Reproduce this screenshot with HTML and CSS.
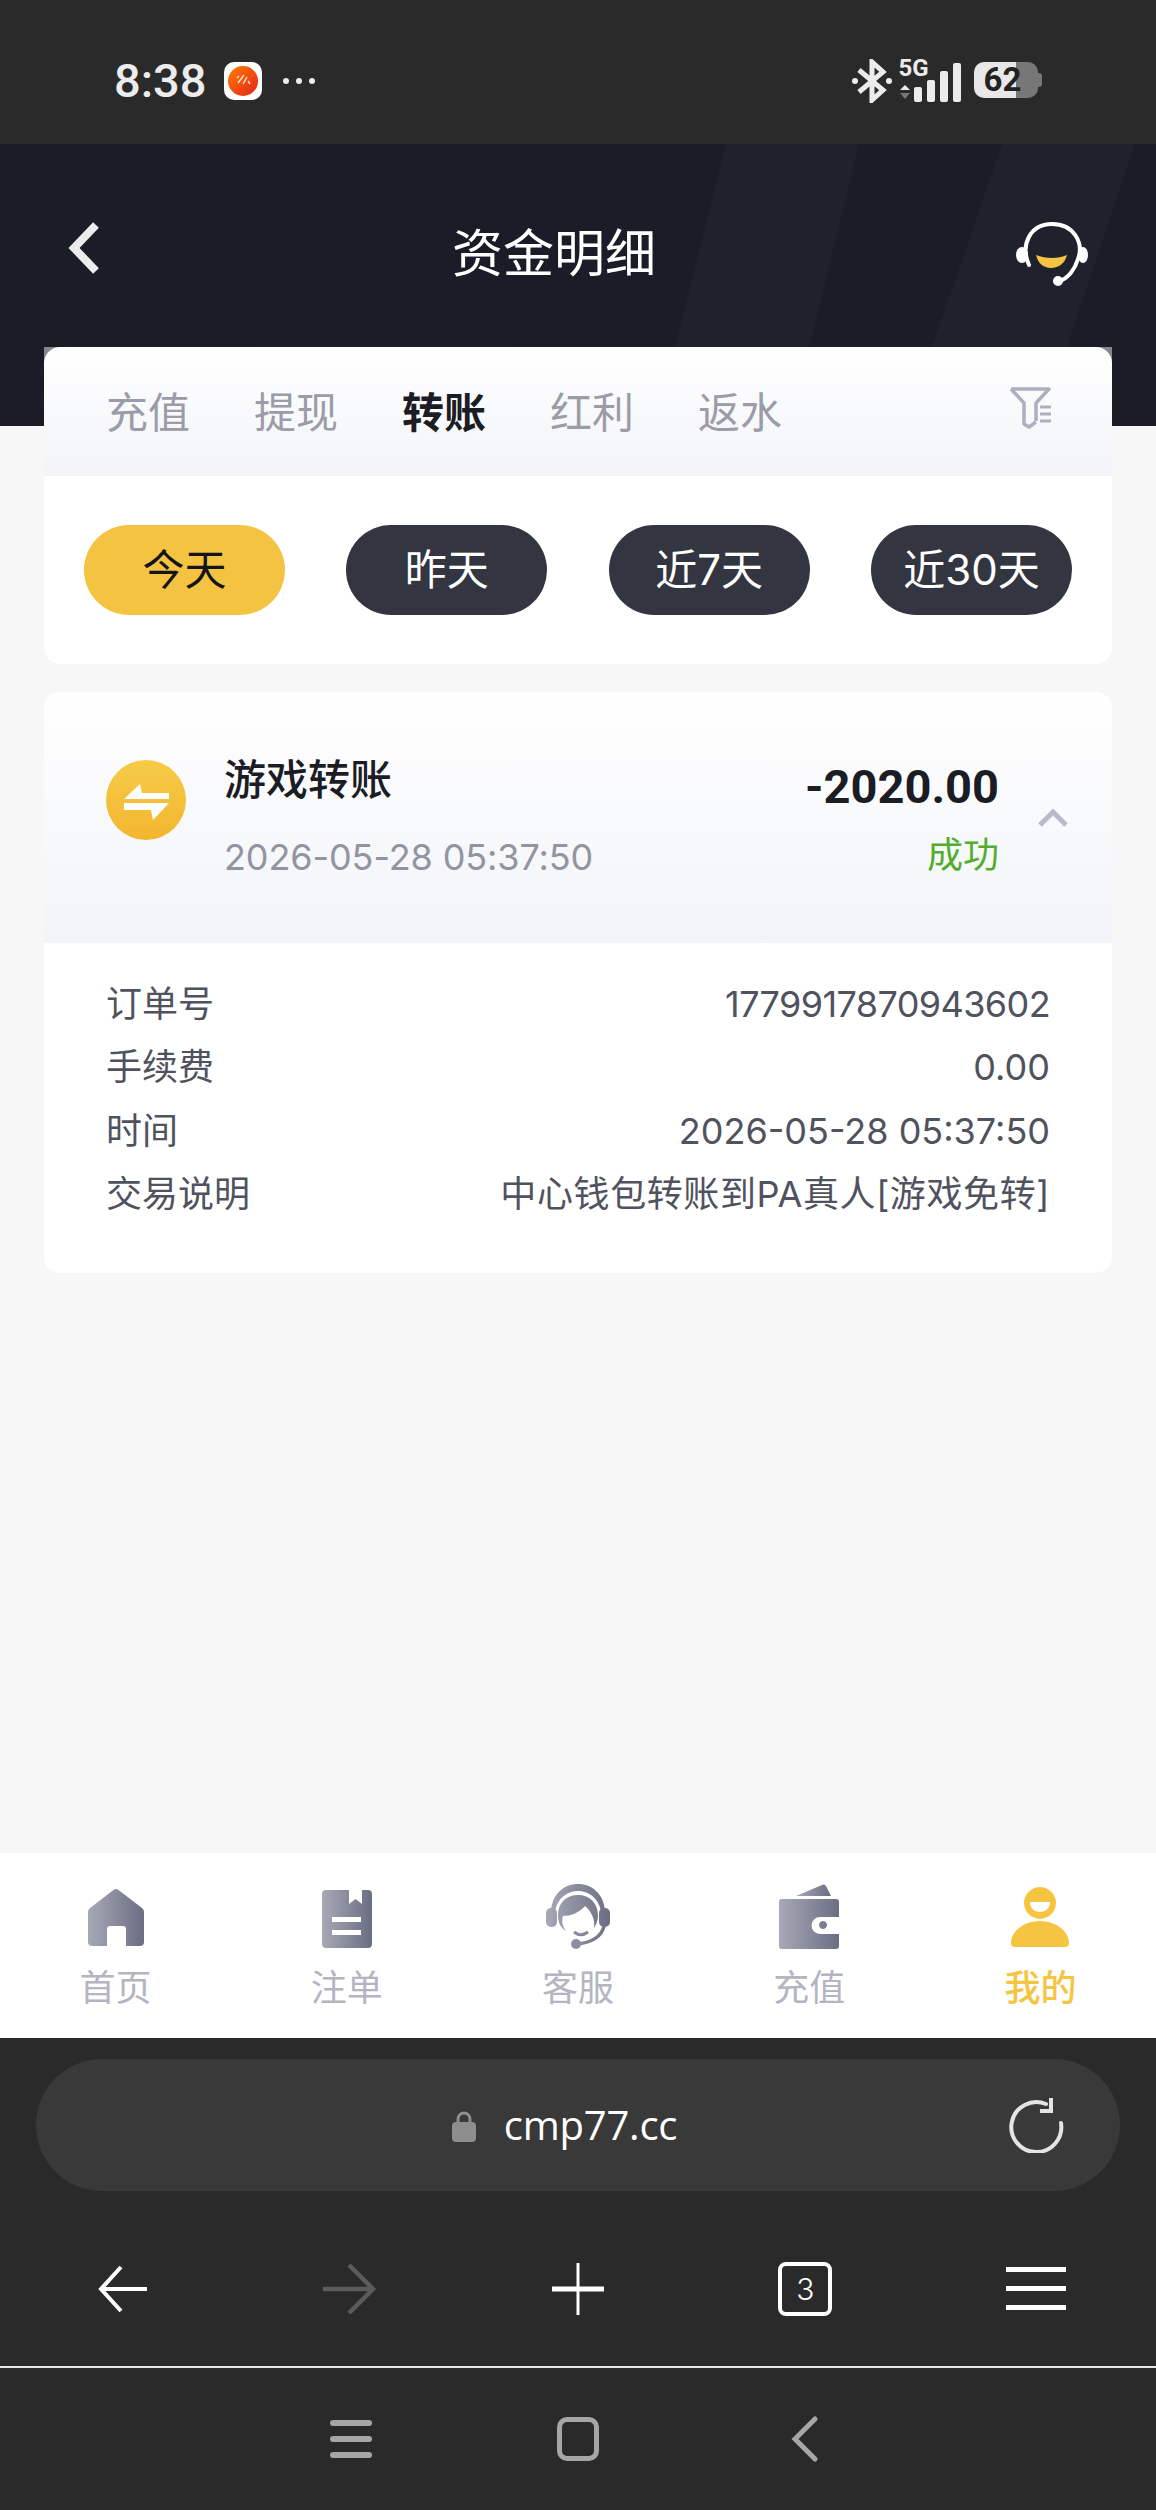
FILE: index.html
```html
<!DOCTYPE html>
<html lang="zh-CN">
<head>
    <meta charset="UTF-8">
    <meta name="viewport" content="width=device-width, initial-scale=1.0">
    <title>资金明细</title>
    <link rel="stylesheet" href="styles.css">
</head>
<body>
    <div class="status-bar">
        <span class="clock">8:38</span>
        <span class="app-badge">
            <svg viewBox="0 0 30 30" width="30" height="30">
                <defs>
                    <linearGradient id="appGrad" x1="0" y1="0" x2="1" y2="1">
                        <stop offset="0" stop-color="#ff7d00"/>
                        <stop offset="1" stop-color="#e2241c"/>
                    </linearGradient>
                </defs>
                <circle cx="15" cy="15" r="15" fill="url(#appGrad)"/>
                <path d="M9 12 L11 10 M10 17 L16 9 M15 18 L19 11 M20 15 L22 18" stroke="#ffe3c8" stroke-width="1.500" fill="none"/>
            </svg>
        </span>
        <span class="more-dots"><i></i><i></i><i></i></span>
        <svg class="bluetooth" viewBox="0 0 40 44" width="40" height="44">
            <path d="M7 11 L31 31 L20 41 V3 L31 13 L7 33" fill="none" stroke="#ececec" stroke-width="5"/>
            <circle cx="3" cy="22" r="3" fill="#ececec"/>
            <circle cx="37" cy="22" r="3" fill="#ececec"/>
        </svg>
        <div class="signal">
            <span class="net-type">5G</span>
            <svg viewBox="0 0 62 42" width="62" height="42">
                <path d="M6 22 L11 27 H1 Z" fill="#ececec"/>
                <path d="M1 30 H11 L6 36 Z" fill="#777"/>
                <rect x="15" y="24" width="8" height="15" rx="2" fill="#ececec"/>
                <rect x="28" y="17" width="8" height="22" rx="2" fill="#ececec"/>
                <rect x="41" y="8" width="8" height="31" rx="2" fill="#ececec"/>
                <rect x="54" y="0" width="8" height="39" rx="2" fill="#ececec"/>
            </svg>
        </div>
        <div class="battery"><span>62</span></div>
    </div>

    <header class="page-head">
        <svg class="stripes" viewBox="0 0 1156 282" width="1156" height="282">
            <polygon points="726,0 859,0 790,282 655,282" fill="#1f222c"/>
            <polygon points="1002,0 1135,0 1040,282 905,282" fill="#1f222c"/>
        </svg>
        <svg class="back" viewBox="0 0 32 52" width="32" height="52">
            <path d="M28 3 L6 26 L28 49" fill="none" stroke="#ececec" stroke-width="8"/>
        </svg>
        <h1>资金明细</h1>
        <svg class="service" viewBox="0 0 72 66" width="72" height="66">
            <path d="M13 44 C4 24 14 3 36 3 C58 3 68 22 62 38 C59 48 52 58 43 60" fill="none" stroke="#fff" stroke-width="4" stroke-linecap="round"/>
            <ellipse cx="6" cy="34" rx="6" ry="8" fill="#fff"/>
            <ellipse cx="67" cy="34" rx="5" ry="8" fill="#fff"/>
            <circle cx="42" cy="60" r="5" fill="#fff"/>
            <path d="M20 34 C30 38 42 38 51 34 C49 42 43 47 35 47 C27 47 22 42 20 34 Z" fill="#f5c242"/>
        </svg>
    </header>

    <main class="content">
        <section class="card filter-card">
            <div class="tabs">
                <span class="tab">充值</span>
                <span class="tab">提现</span>
                <span class="tab active">转账</span>
                <span class="tab">红利</span>
                <span class="tab">返水</span>
                <svg class="filter-icon" viewBox="0 0 44 42" width="44" height="42">
                    <path d="M3 2 H41 L28 16 V34 M3 2 L16 16 V37 L21 40 L28 35" fill="none" stroke="#adafbf" stroke-width="3.500" stroke-linejoin="round"/>
                    <path d="M32 20 H43 M32 27 H43 M32 34 H43" stroke="#adafbf" stroke-width="3"/>
                </svg>
            </div>
            <div class="pills">
                <span class="pill selected">今天</span>
                <span class="pill">昨天</span>
                <span class="pill">近7天</span>
                <span class="pill">近30天</span>
            </div>
        </section>

        <section class="card record-card">
            <div class="record-head">
                <svg class="swap-icon" viewBox="0 0 80 80" width="80" height="80">
                    <defs>
                        <linearGradient id="swapGrad" x1="0" y1="0" x2="0" y2="1">
                            <stop offset="0" stop-color="#f6cb47"/>
                            <stop offset="1" stop-color="#f3b630"/>
                        </linearGradient>
                    </defs>
                    <circle cx="40" cy="40" r="40" fill="url(#swapGrad)"/>
                    <path d="M18 39 L34 24 L36 33 H63 V39 Z M18 43 H63 L47 60 L45 50 H18 Z" fill="#fff"/>
                </svg>
                <div class="record-info">
                    <div class="record-title">游戏转账</div>
                    <div class="record-date">2026-05-28 05:37:50</div>
                </div>
                <div class="record-money">
                    <div class="amount">-2020.00</div>
                    <div class="state">成功</div>
                </div>
                <svg class="chevron" viewBox="0 0 32 20" width="32" height="20">
                    <path d="M3 17 L16 4 L29 17" fill="none" stroke="#b9bbcb" stroke-width="5"/>
                </svg>
            </div>
            <div class="record-detail">
                <div class="detail-row"><span class="detail-label">订单号</span><span class="order-no">1779917870943602</span></div>
                <div class="detail-row"><span class="detail-label">手续费</span><span>0.00</span></div>
                <div class="detail-row"><span class="detail-label">时间</span><span>2026-05-28 05:37:50</span></div>
                <div class="detail-row"><span class="detail-label">交易说明</span><span class="desc">中心钱包转账到PA真人[游戏免转]</span></div>
            </div>
        </section>
    </main>

    <nav class="tabbar">
        <a class="nav-item">
            <svg viewBox="0 0 56 66" width="56" height="66">
                <defs>
                    <linearGradient id="navGrad" x1="0" y1="0" x2="1" y2="0">
                        <stop offset="0" stop-color="#a7a9b6"/>
                        <stop offset="1" stop-color="#6b6e83"/>
                    </linearGradient>
                    <linearGradient id="headGrad" gradientUnits="userSpaceOnUse" x1="0" y1="0" x2="64" y2="0">
                        <stop offset="0" stop-color="#a7a9b6"/>
                        <stop offset="1" stop-color="#6b6e83"/>
                    </linearGradient>
                </defs>
                <path d="M25.500 6 a4 4 0 0 1 5 0 L54 24 a5 5 0 0 1 2 4 V58 a4 4 0 0 1 -4 4 H38 V45 a3 3 0 0 0 -3 -3 H22 a3 3 0 0 0 -3 3 V62 H4 a4 4 0 0 1 -4 -4 V28 a5 5 0 0 1 2 -4 Z" fill="url(#navGrad)"/>
            </svg>
            <span>首页</span>
        </a>
        <a class="nav-item">
            <svg viewBox="0 0 50 66" width="50" height="66">
                <path fill-rule="evenodd" d="M4 6 H27 V20 L33.500 15 L40 20 V6 H46 a4 4 0 0 1 4 4 V60 a4 4 0 0 1 -4 4 H4 a4 4 0 0 1 -4 -4 V10 a4 4 0 0 1 4 -4 Z M10 33 V38 H39 V33 Z M10 46 V51 H39 V46 Z" fill="url(#navGrad)"/>
            </svg>
            <span>注单</span>
        </a>
        <a class="nav-item">
            <svg viewBox="0 0 64 66" width="64" height="66">
                <path d="M5 27 C6 10 18 0 32 0 C46 0 58 10 59 27 L55 27 C52 13 42 7 32 7 C22 7 12 13 9 27 Z" fill="url(#headGrad)"/>
                <path d="M32 11 C44 11 52 19 52 32 C52 37 50 41 48 44 C49 36 46 28 39 22 C33 29 24 32 17 32 C15 38 17 43 20 47 C14 43 12 38 12 31 C12 19 20 11 32 11 Z" fill="url(#headGrad)"/>
                <rect x="0" y="24" width="11" height="19" rx="5" fill="url(#headGrad)"/>
                <rect x="53" y="24" width="11" height="19" rx="5" fill="url(#headGrad)"/>
                <path d="M28 48 C33 52 38 51 42 48" fill="none" stroke="url(#headGrad)" stroke-width="3"/>
                <path d="M58 42 C56 52 46 59 30 60" fill="none" stroke="url(#headGrad)" stroke-width="3.500"/>
                <circle cx="30" cy="60" r="5" fill="url(#headGrad)"/>
            </svg>
            <span>客服</span>
        </a>
        <a class="nav-item">
            <svg viewBox="0 0 60 66" width="60" height="66">
                <path d="M17 12 L43 1 a3 3 0 0 1 4 1 L52 12 Z" fill="url(#navGrad)"/>
                <path d="M3 15 H57 a3 3 0 0 1 3 3 V33 H41 a8 8 0 0 0 0 17 H60 V62 a3 3 0 0 1 -3 3 H3 a3 3 0 0 1 -3 -3 V18 a3 3 0 0 1 3 -3 Z M44 37 a4 4 0 1 0 0.010 0 Z" fill-rule="evenodd" fill="url(#navGrad)"/>
            </svg>
            <span>充值</span>
        </a>
        <a class="nav-item active">
            <svg viewBox="0 0 58 66" width="58" height="66">
                <path fill-rule="evenodd" d="M29 3 a16 16 0 1 0 0.010 0 Z M19 18 H39 C39 24 35 28 29 28 C23 28 19 24 19 18 Z" fill="#f5c542"/>
                <path d="M29 37 C46 37 58 48 58 59 a4 4 0 0 1 -4 4 H4 a4 4 0 0 1 -4 -4 C0 48 12 37 29 37 Z" fill="#f5c542"/>
            </svg>
            <span>我的</span>
        </a>
    </nav>

    <div class="browser-bar">
        <div class="url-box">
            <svg class="lock" viewBox="0 0 26 32" width="26" height="32">
                <path d="M7 14 V9 a6 6 0 0 1 12 0 V14" fill="none" stroke="#8e8e8e" stroke-width="3"/>
                <rect x="1" y="12" width="24" height="20" rx="4" fill="#8e8e8e"/>
            </svg>
            <span class="url-text">cmp77.cc</span>
            <svg class="reload" viewBox="0 0 56 56" width="56" height="56">
                <path d="M38 7 A25 25 0 1 0 53 26" fill="none" stroke="#e4e4e4" stroke-width="4" stroke-linecap="round"/>
                <path d="M43 1 V14 H32" fill="none" stroke="#e4e4e4" stroke-width="4"/>
            </svg>
        </div>
        <div class="browser-tools">
            <svg viewBox="0 0 50 50" width="50" height="50">
                <path d="M24 3 L4 25 L24 47 M4 25 H50" fill="none" stroke="#fff" stroke-width="4"/>
            </svg>
            <svg viewBox="0 0 56 50" width="56" height="50">
                <path d="M28 1 L52 25 L28 49 M2 25 H52" fill="none" stroke="#5b5b5b" stroke-width="4.500"/>
            </svg>
            <svg viewBox="0 0 54 54" width="54" height="54">
                <path d="M27 1 V53" stroke="#fff" stroke-width="3"/>
                <path d="M1 27 H53" stroke="#fff" stroke-width="5"/>
            </svg>
            <span class="tab-count">3</span>
            <span class="hamburger"><i></i><i></i><i></i></span>
        </div>
        <div class="system-nav">
            <span class="sys-menu"><i></i><i></i><i></i></span>
            <span class="sys-home"></span>
            <svg viewBox="0 0 30 46" width="30" height="46">
                <path d="M26 3 L6 23 L26 43" fill="none" stroke="#a6a6a6" stroke-width="5" stroke-linecap="round"/>
            </svg>
        </div>
    </div>
</body>
</html>
```

FILE: styles.css
```css
* {
    box-sizing: border-box;
}
html, body {
    margin: 0;
    padding: 0;
}
body {
    width: 1156px;
    height: 2510px;
    display: flex;
    flex-direction: column;
    overflow: hidden;
    background-color: #f7f7f7;
    font-family: Inter, "Noto Sans CJK SC", sans-serif;
}

/* phone status bar */
.status-bar {
    height: 144px;
    flex-shrink: 0;
    display: flex;
    align-items: center;
    padding: 18px 0 0 114px;
    background-color: #2a2a2a;
    color: #ececec;
}
.clock {
    font-family: Roboto, sans-serif;
    font-size: 47px;
    font-weight: 500;
    line-height: 44px;
}
.app-badge {
    width: 38px;
    height: 38px;
    margin-left: 17px;
    border-radius: 10px;
    background-color: #fff;
    display: flex;
    align-items: center;
    justify-content: center;
}
.more-dots {
    display: flex;
    gap: 7px;
    margin-left: 21px;
}
.more-dots i {
    width: 6px;
    height: 6px;
    border-radius: 50%;
    background-color: #ececec;
}
.bluetooth {
    margin-left: 537px;
}
.signal {
    position: relative;
    width: 62px;
    height: 42px;
    margin-left: 7px;
    margin-top: 6px;
}
.net-type {
    position: absolute;
    left: 0;
    top: -7px;
    font-family: Roboto, sans-serif;
    font-size: 24px;
    font-weight: 700;
    line-height: 24px;
}
.signal svg {
    display: block;
}
.battery {
    position: relative;
    width: 64px;
    height: 36px;
    margin-left: 13px;
    margin-top: -2px;
    padding-right: 6px;
    border-radius: 10px;
    background: linear-gradient(90deg, #e8e8e8 0 42px, #777 42px);
    color: #222;
    font-family: Roboto, sans-serif;
    font-size: 33px;
    font-weight: 700;
    line-height: 36px;
    text-align: center;
}
.battery::after {
    content: "";
    position: absolute;
    right: -4px;
    top: 11px;
    width: 4px;
    height: 14px;
    border-radius: 0 3px 3px 0;
    background-color: #777;
}

/* dark title bar */
.page-head {
    position: relative;
    height: 282px;
    flex-shrink: 0;
    display: flex;
    align-items: flex-start;
    justify-content: space-between;
    padding: 78px 68px 0 68px;
    background-color: #1a1d27;
}
.stripes {
    position: absolute;
    left: 0;
    top: 0;
}
.back, .service {
    position: relative;
}
.service {
    margin-top: -1px;
}
.page-head h1 {
    position: relative;
    margin: 2px 8px 0 0;
    color: #fff;
    font-size: 51px;
    font-weight: 400;
    line-height: 60px;
}

.content {
    flex: 1;
    padding: 0 44px;
    margin-top: -79px;
    position: relative;
}
.card {
    background-color: #fff;
    border-radius: 16px;
    overflow: hidden;
}

/* filter card */
.filter-card {
    height: 317px;
    border-radius: 0 0 16px 16px;
    background: linear-gradient(#85878f 0 20px, #fff 20px);
}
.tabs {
    height: 129px;
    display: flex;
    align-items: center;
    gap: 64px;
    padding: 2px 60px 0 62px;
    border-radius: 16px 16px 0 0;
    background: linear-gradient(#fff, #f2f4f8);
}
.tab {
    color: #9b9ca7;
    font-size: 42px;
    line-height: 50px;
}
.tab.active {
    color: #1b1c24;
    font-weight: 700;
}
.filter-icon {
    margin-left: auto;
    margin-top: -10px;
}
.pills {
    display: flex;
    justify-content: space-between;
    padding: 49px 40px 0;
}
.pill {
    width: 201px;
    height: 90px;
    border-radius: 45px;
    background-color: #333540;
    color: #fff;
    font-size: 42px;
    line-height: 90px;
    text-align: center;
}
.pill.selected {
    background-color: #f5c342;
    color: #14151a;
}

/* transaction record */
.record-card {
    height: 581px;
    margin-top: 28px;
}
.record-head {
    height: 251px;
    display: flex;
    align-items: flex-start;
    padding: 66px 43px 0 62px;
    background: linear-gradient(#fff, #f2f4f8);
}
.swap-icon {
    flex-shrink: 0;
    margin-top: 2px;
}
.record-info {
    margin-left: 38px;
    flex: 1;
}
.record-title {
    color: #1b1c24;
    font-size: 42px;
    font-weight: 500;
    line-height: 44px;
}
.record-date {
    margin-top: 33px;
    color: #9394a1;
    font-size: 36px;
    letter-spacing: -0.1px;
    line-height: 44px;
}
.record-money {
    margin-top: 4px;
    text-align: right;
}
.amount {
    color: #1b1c24;
    font-family: Roboto, sans-serif;
    font-size: 47px;
    font-weight: 700;
    line-height: 50px;
}
.state {
    margin-top: 21px;
    color: #52ad2e;
    font-size: 36px;
    line-height: 44px;
}
.chevron {
    margin-left: 38px;
    margin-top: 50px;
}
.record-detail {
    padding: 30px 62px 0 62px;
    color: #50525e;
    font-size: 36px;
}
.detail-row {
    display: flex;
    justify-content: space-between;
    height: 63.3px;
    line-height: 63.3px;
}
.order-no {
    letter-spacing: -0.6px;
}
.desc {
    letter-spacing: 0.6px;
}

/* app tab bar */
.tabbar {
    height: 185px;
    flex-shrink: 0;
    display: grid;
    grid-template-columns: repeat(5, 1fr);
    background-color: #fff;
}
.nav-item {
    display: flex;
    flex-direction: column;
    align-items: center;
    padding-top: 28px;
    color: #b4b5c0;
    font-size: 36px;
    line-height: 44px;
}
.nav-item svg {
    display: block;
    height: 72px;
}
.nav-item span {
    margin-top: 13px;
}
.nav-item.active {
    color: #f5c542;
    font-weight: 500;
}

/* browser chrome */
.browser-bar {
    height: 472px;
    flex-shrink: 0;
    background-color: #2a2a2a;
    padding-top: 21px;
}
.url-box {
    position: relative;
    height: 132px;
    margin: 0 36px;
    border-radius: 66px;
    background-color: #393939;
    display: flex;
    align-items: center;
    justify-content: center;
    gap: 27px;
    padding-right: 28px;
}
.url-text {
    color: #fff;
    font-family: "Open Sans", sans-serif;
    font-size: 40px;
    letter-spacing: -0.2px;
    line-height: 50px;
}
.lock {
    margin-top: 2px;
}
.reload {
    position: absolute;
    right: 56px;
    top: 38px;
}
.browser-tools {
    height: 177px;
    border-bottom: 2px solid #e8e8e8;
    padding: 20px 90px 0 97px;
    display: flex;
    align-items: center;
    justify-content: space-between;
}
.tab-count {
    width: 54px;
    height: 54px;
    border: 4px solid #fff;
    border-radius: 8px;
    color: #fff;
    font-size: 30px;
    font-weight: 300;
    line-height: 46px;
    text-align: center;
}
.hamburger {
    width: 60px;
    display: flex;
    flex-direction: column;
    gap: 14px;
}
.hamburger i {
    height: 5px;
    background-color: #fff;
}
.system-nav {
    display: flex;
    align-items: center;
    justify-content: center;
    height: 141px;
    padding-right: 8px;
}
.sys-menu {
    width: 42px;
    display: flex;
    flex-direction: column;
    gap: 10px;
}
.sys-menu i {
    height: 6px;
    border-radius: 3px;
    background-color: #a6a6a6;
}
.sys-home {
    width: 42px;
    height: 44px;
    margin: 0 190px 0 185px;
    border: 5px solid #a6a6a6;
    border-radius: 10px;
}
```
